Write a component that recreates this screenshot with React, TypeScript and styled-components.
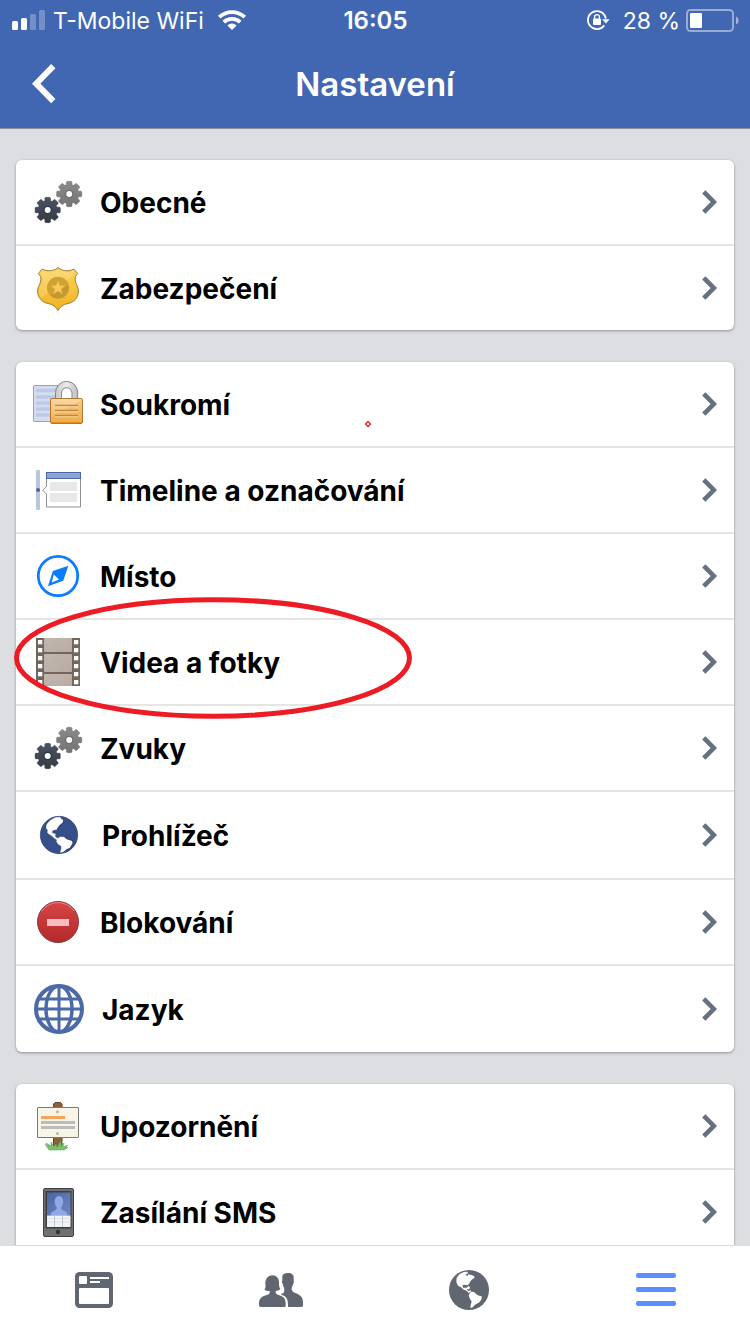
import React from 'react';
import styled, { createGlobalStyle } from 'styled-components';

const GlobalStyle = createGlobalStyle`
  * { box-sizing: border-box; }
  body {
    margin: 0;
    background: #dddee2;
    font-family: Inter, "Liberation Sans", sans-serif;
    color: #000;
  }
  svg { display: block; flex: none; overflow: visible; }
`;

const Screen = styled.div`
  display: flex;
  flex-direction: column;
  height: 100vh;
`;

const Header = styled.header`
  flex: none;
  background: #4267b2;
  border-bottom: 1px solid #8d919b;
  color: #fff;
`;

const StatusBar = styled.div`
  display: grid;
  grid-template-columns: 1fr auto 1fr;
  align-items: center;
  height: 40px;
  padding: 0 11px 0 12px;
  font-size: 23px;
  line-height: 28px;
`;

const StatusGroup = styled.div<{ $end?: boolean }>`
  display: flex;
  align-items: center;
  justify-content: ${(p) => (p.$end ? 'flex-end' : 'flex-start')};
  gap: ${(p) => (p.$end ? 6 : 8)}px;
`;

const Carrier = styled.span`
  padding: 2px 6px 0 0;
`;

const Charge = styled.span`
  padding: 2px 0 0 8px;
`;

const Clock = styled.time`
  padding-top: 2px;
  font-size: 24px;
  font-weight: 600;
`;

const NavBar = styled.div`
  display: grid;
  grid-template-columns: 1fr auto 1fr;
  align-items: center;
  height: 88px;
  padding: 0 32px;
`;

const BackButton = styled.button`
  justify-self: start;
  padding: 0;
  border: 0;
  background: none;
  color: inherit;
  cursor: pointer;
`;

const Title = styled.h1`
  margin: 0;
  font-size: 33px;
  font-weight: 600;
  line-height: 40px;
`;

const Content = styled.main`
  flex: 1;
  min-height: 0;
  display: flex;
  flex-direction: column;
  gap: 32px;
  padding: 31px 16px;
  overflow-y: auto;
  scrollbar-width: none;
`;

const Card = styled.ul`
  flex: none;
  margin: 0;
  padding: 0;
  list-style: none;
  background: #fff;
  border-radius: 6px;
  box-shadow: 0 1px 3px rgba(0, 0, 0, 0.35);
`;

const Item = styled.li`
  position: relative;
  & + & { border-top: 2px solid #e5e5e5; }
`;

const RowLink = styled.a`
  display: flex;
  align-items: center;
  gap: 18px;
  padding: 18px 17px 18px 18px;
  color: inherit;
  text-decoration: none;
`;

const Label = styled.span`
  flex: 1;
  padding-top: 2px;
  font-size: 28px;
  font-weight: 650;
  line-height: 34px;
`;

const Marker = styled.svg`
  position: absolute;
  z-index: 1;
  left: -2px;
  top: -23px;
  pointer-events: none;
`;

const Dot = styled.svg`
  position: absolute;
  z-index: 1;
  left: 348px;
  top: 58px;
  pointer-events: none;
`;

const TabBar = styled.nav`
  flex: none;
  display: grid;
  grid-template-columns: repeat(4, 1fr);
  height: 89px;
  background: #fff;
  border-top: 1px solid #dcdde0;
`;

const Tab = styled.a<{ $active?: boolean }>`
  display: flex;
  align-items: center;
  justify-content: center;
  color: ${(p) => (p.$active ? '#5890ff' : '#606770')};
`;

/* ---------- status bar icons ---------- */

const SignalIcon = () => (
  <svg width="33" height="20" viewBox="0 0 33 20" fill="#fff">
    <rect x="0" y="11" width="6" height="9" rx="1.5" />
    <rect x="9" y="8" width="6" height="12" rx="1.5" />
    <rect x="18" y="4" width="6" height="16" rx="1.5" opacity=".27" />
    <rect x="27" y="0" width="6" height="20" rx="1.5" opacity=".27" />
  </svg>
);

const WifiIcon = () => (
  <svg width="28" height="20" viewBox="0 0 28 20" fill="none" stroke="#fff" strokeWidth="3.8">
    <path d="M1.2 7.200a18.500 18.500 0 0 1 25.600 0" />
    <path d="M5.800 12.200a12 12 0 0 1 16.400 0" />
    <path d="M14 20l-4.600-4.600a6.600 6.600 0 0 1 9.200 0z" fill="#fff" stroke="none" />
  </svg>
);

const RotationLockIcon = () => (
  <svg width="22" height="20" viewBox="0 0 22 20" fill="none" stroke="#fff" strokeWidth="1.8">
    <path d="M17.200 15.400A9 9 0 1 1 18.800 8.600" />
    <path d="M15.200 9.200h7.400l-3.700 4.300z" fill="#fff" stroke="none" />
    <rect x="6" y="8.400" width="8" height="6.600" rx="1" fill="#fff" stroke="none" />
    <path d="M7.600 9V7a2.400 2.400 0 0 1 4.800 0v2" strokeWidth="1.400" />
  </svg>
);

const BatteryIcon = () => (
  <svg width="53" height="23" viewBox="0 0 53 23">
    <rect x="1" y="1" width="46" height="21" rx="3.5" fill="none" stroke="#fff" strokeOpacity=".45" strokeWidth="2" />
    <rect x="4" y="4" width="12" height="15" rx="1" fill="#fff" />
    <path d="M50 7.500c3.500 1.500 3.500 6.500 0 8z" fill="#fff" opacity=".5" />
  </svg>
);

const BackIcon = () => (
  <svg width="24" height="40" viewBox="0 0 24 40" fill="none" stroke="#fff" strokeWidth="6">
    <path d="M21.300 2.200L4.200 19.700l17.100 17.500" />
  </svg>
);

const ChevronIcon = () => (
  <svg width="15" height="24" viewBox="0 0 15 24" fill="none" stroke="#667080" strokeWidth="4.600">
    <path d="M1.800 1.800L11.800 12 1.800 22.200" />
  </svg>
);

/* ---------- row icons ---------- */

function gearPath(cx: number, cy: number): string {
  const points: string[] = [];
  const add = (r: number, deg: number) => {
    const a = (deg * Math.PI) / 180;
    points.push(`${(cx + r * Math.cos(a)).toFixed(2)} ${(cy + r * Math.sin(a)).toFixed(2)}`);
  };
  for (let i = 0; i < 8; i++) {
    const a = i * 45;
    add(9.6, a - 20);
    add(10.2, a - 16);
    add(12.2, a - 14);
    add(12.8, a - 9);
    add(12.8, a + 9);
    add(12.2, a + 14);
    add(10.2, a + 16);
    add(9.6, a + 20);
  }
  return `M${points.join('L')}Z`;
}

const Gear = ({ cx, cy, fill, rim }: { cx: number; cy: number; fill: string; rim: string }) => (
  <g>
    <path d={gearPath(cx, cy)} fill={fill} stroke={rim} strokeWidth=".4" />
    <circle cx={cx} cy={cy} r="4" fill={rim} />
    <circle cx={cx} cy={cy} r="3" fill="#fff" />
  </g>
);

const GearsIcon = () => (
  <svg width="48" height="48" viewBox="0 0 48 48">
    <defs>
      <linearGradient id="gearLight" x1="0" y1="0" x2="0" y2="1">
        <stop offset="0" stopColor="#8a8a8a" />
        <stop offset="1" stopColor="#747474" />
      </linearGradient>
      <linearGradient id="gearDark" x1="0" y1="0" x2="0" y2="1">
        <stop offset="0" stopColor="#4b5261" />
        <stop offset="1" stopColor="#363b46" />
      </linearGradient>
    </defs>
    <Gear cx={35.200} cy={16} fill="url(#gearLight)" rim="#6a6a6a" />
    <Gear cx={13.700} cy={32} fill="url(#gearDark)" rim="#2f343e" />
  </svg>
);

const BadgeIcon = () => (
  <svg width="48" height="48" viewBox="0 0 48 48">
    <defs>
      <linearGradient id="badge" x1="0" y1="0" x2="0" y2="1">
        <stop offset="0" stopColor="#fad55c" />
        <stop offset="1" stopColor="#f3b11f" />
      </linearGradient>
    </defs>
    <path
      d="M24 3.500C22 6 14 8.500 8.300 5L4.300 9.500C8 13 7.500 17 4.500 22.500C1.500 30 6 38 14 39.500C19 40.200 22 43 24 46.500C26 43 29 40.200 34 39.500C42 38 46.500 30 43.500 22.500C40.500 17 40 13 43.700 9.500L39.700 5C34 8.500 26 6 24 3.500Z"
      fill="url(#badge)" stroke="#9b7d33" strokeWidth="1"
    />
    <path d="M24 5.200C22 7.500 14 10 8.600 6.600L6 9.600C9.400 13.500 9 18 6 23C4.500 27 4.900 31 7 34L39 11.500C38.800 10 39.500 9 41 8L39.400 6.600C34 10 26 7.500 24 5.200Z" fill="#fff" opacity=".16" />
    <circle cx="24" cy="23.700" r="11" fill="#d0a236" />
    <path d="M16.300 31.500A11 11 0 0 0 34.600 21z" fill="#b5922c" opacity=".55" />
    <path d="M24 17l2 4.800h5l-4 3.200 1.500 5-4.500-3-4.500 3 1.500-5-4-3.200h5z" fill="#fbc95a" stroke="#efb23c" strokeWidth=".7" />
  </svg>
);

const PrivacyIcon = () => (
  <svg width="48" height="48" viewBox="0 0 48 48">
    <defs>
      <linearGradient id="lockBody" x1="0" y1="0" x2="0" y2="1">
        <stop offset="0" stopColor="#fbd8a0" />
        <stop offset="1" stopColor="#f6b04c" />
      </linearGradient>
      <linearGradient id="shackle" x1="0" y1="0" x2="1" y2="0">
        <stop offset="0" stopColor="#c8c8c8" />
        <stop offset=".5" stopColor="#ececec" />
        <stop offset="1" stopColor="#bdbdbd" />
      </linearGradient>
    </defs>
    <rect x="-.5" y="5.500" width="30" height="36" rx="1.500" fill="#d4dcef" stroke="#8da2d6" />
    <path d="M3.500 10.500h22M3.500 17h22M3.500 23h22M3.500 29h22M3.500 35h22" stroke="#bdc9e6" strokeWidth="3.600" strokeLinecap="round" />
    <path d="M27.400 19.500V13a5.300 5.300 0 0 1 10.600 0v6.500z" fill="#fff" />
    <path d="M21.500 19.500V12.500a11 11 0 0 1 22.200 0V19.500H38V13a5.300 5.300 0 0 0-10.600 0V19.500Z" fill="url(#shackle)" stroke="#858585" strokeWidth="1" />
    <rect x="16.500" y="18.500" width="32" height="25" rx="1.500" fill="url(#lockBody)" stroke="#ad7a35" />
    <path d="M17 43V37L48 20v23z" fill="#ef9a2c" opacity=".22" />
    <path d="M17.500 42.500h30" stroke="#dd8c24" strokeWidth="1" />
    <path d="M21 25.500h23M21 30.500h23M21 35.500h23" stroke="#b98a4c" strokeWidth="1.500" />
    <path d="M21 26.800h23M21 31.800h23M21 36.800h23" stroke="#fce3b8" strokeWidth="1" opacity=".7" />
  </svg>
);

const TimelineIcon = () => (
  <svg width="48" height="48" viewBox="0 0 48 48">
    <rect x="2" y="4" width="4" height="40" rx="1" fill="#b9c6de" />
    <circle cx="4" cy="24" r="2" fill="#4867a8" />
    <path d="M12.500 8V20.500L8.800 24.300l3.700 3.800V41h34V8z" fill="#fff" stroke="#8f9194" strokeWidth="1" />
    <rect x="12.500" y="6.500" width="34" height="6" fill="#8fa4d0" stroke="#4a68a8" />
    <rect x="16" y="16" width="27" height="9" fill="#e8e8e8" />
    <rect x="16" y="27" width="27" height="9" fill="#e8e8e8" />
  </svg>
);

const CompassIcon = () => (
  <svg width="48" height="48" viewBox="0 0 48 48">
    <circle cx="24" cy="24" r="19.700" fill="#fff" stroke="#0a7cff" strokeWidth="2.700" />
    <path d="M34.400 13.800L18.900 18.900 13.900 34.200 29.200 28.700Z" fill="#0a7cff" />
    <path d="M19.800 22.600L17.600 30.600 25 27.600Z" fill="#fff" />
  </svg>
);

const FilmIcon = () => (
  <svg width="48" height="48" viewBox="0 0 48 48">
    <defs>
      <linearGradient id="filmFrame" x1="0" y1="0" x2="1" y2="1">
        <stop offset="0" stopColor="#c0b7ae" />
        <stop offset="1" stopColor="#b9aba3" />
      </linearGradient>
    </defs>
    <rect x="2" width="44" height="48" fill="#74655c" />
    <rect x="10" y="0" width="28" height="14" rx="1" fill="url(#filmFrame)" />
    <rect x="10" y="16" width="28" height="18" rx="1" fill="url(#filmFrame)" />
    <rect x="10" y="36" width="28" height="12" rx="1" fill="url(#filmFrame)" />
    {[2, 10, 18, 26, 34, 42].map((y) => (
      <g key={y} fill="#fff">
        <rect x="4" y={y} width="4.300" height="4.300" />
        <rect x="40" y={y} width="4.300" height="4.300" />
      </g>
    ))}
  </svg>
);

const BrowserIcon = () => (
  <svg width="50" height="50" viewBox="72 315 150 150">
    <circle cx="147" cy="390" r="56" fill="#374f88" stroke="#2a3d6c" strokeWidth="2" />
    <path
      d="M136 338L150 337L153 342L159 346L158 352L150 358L143 366L140 373L134 374L127 376L125 383L131 386L136 388L134 393L139 398L145 401L143 405L134 400L127 393L119 388L113 383L114 376L109 370L111 358L120 347Z"
      fill="#fff" stroke="#fff" strokeWidth="2" strokeLinejoin="round"
    />
    <path
      d="M143 402L150 396L162 397L170 403L186 408L187 415L179 428L168 433L159 440L152 442L154 432L155 424L144 416L140 409Z"
      fill="#fff" stroke="#fff" strokeWidth="2" strokeLinejoin="round"
    />
    <path d="M161 346L160 353L145 368L142 375M164 396L172 402L188 407L189 416L180 430L169 435" fill="none" stroke="#22335c" strokeWidth="3" opacity=".7" />
  </svg>
);

const BlockIcon = () => (
  <svg width="48" height="48" viewBox="0 0 48 48">
    <defs>
      <linearGradient id="block" x1="0" y1="0" x2="0" y2="1">
        <stop offset="0" stopColor="#d64545" />
        <stop offset="1" stopColor="#b32a2a" />
      </linearGradient>
    </defs>
    <circle cx="24" cy="24" r="20.500" fill="url(#block)" stroke="#8a3a3a" strokeWidth="1" />
    <path d="M8 13a19.400 19.400 0 0 1 32 0" fill="none" stroke="#ee9090" strokeWidth=".8" />
    <rect x="13" y="21" width="22" height="7" fill="#f8bcc0" />
  </svg>
);

const LanguageIcon = () => (
  <svg width="50" height="50" viewBox="0 0 50 50" fill="none" stroke="#4c69a8" strokeWidth="3.500">
    <circle cx="25" cy="25" r="23" strokeWidth="4" />
    <ellipse cx="25" cy="25" rx="13" ry="23" />
    <path d="M25 2v46M2 25h46M4.500 15h41M4.500 35h41" strokeWidth="3" />
  </svg>
);

const SignIcon = () => (
  <svg width="48" height="48" viewBox="0 0 48 48">
    <path d="M19.500 6V2l1.500-1.500h5.500L28 2v4M19.500 35h8.500v10h-8.500z" fill="#8c5f38" stroke="#6a4526" strokeWidth="1" />
    <rect x="3.500" y="5.500" width="41" height="30" rx=".5" fill="#f8f5e6" stroke="#77797b" />
    <circle cx="23.500" cy="9.700" r="1.500" fill="#b8b8b4" />
    <circle cx="23.500" cy="31.400" r="1.500" fill="#b8b8b4" />
    <rect x="7" y="14" width="24" height="3" fill="#f5a45d" />
    <rect x="7" y="19" width="34" height="3" fill="#bcbcbc" />
    <rect x="7" y="24" width="34" height="3" fill="#bcbcbc" />
    <path d="M15 48l-4-6 4 2.500-3-3.500 5 3 0-4 3 4.500 2-2.500 1 3.500 4-7 0 6 3-3.500-1 4 5-2-2.500 2.500 2.500 0-4 2.500z" fill="#7cc36a" stroke="#56a04a" strokeWidth=".5" />
  </svg>
);

const PhoneIcon = () => (
  <svg width="48" height="48" viewBox="0 0 48 48">
    <defs>
      <linearGradient id="phoneScreen" x1="0" y1="0" x2="1" y2="1">
        <stop offset="0" stopColor="#4a64a4" />
        <stop offset="1" stopColor="#7089c2" />
      </linearGradient>
    </defs>
    <rect x="9.500" y=".5" width="30" height="48" rx="1.500" fill="#6f7072" stroke="#414243" />
    <rect x="11.500" y="3" width="26" height="37.500" fill="#3c3d3f" />
    <rect x="13" y="4.500" width="23.500" height="23" fill="url(#phoneScreen)" />
    <path d="M16.500 27.500c0-5 5.500-4 6.500-7.500-3-3-3.500-12 2-12s5 9 2 12c1 3.500 6.500 2.500 6.500 7.500z" fill="#8ea9e4" />
    <rect x="13" y="27.500" width="23.500" height="11.500" fill="#f1f3f5" />
    <path d="M13 30.500h23.500M13 34h23.500" stroke="#dfe2e6" strokeWidth="1" />
    <path d="M20.500 27.500V39M28.500 27.500V39" stroke="#bfc9d2" strokeWidth="1" />
    <circle cx="24" cy="44" r="2.200" fill="#333435" />
  </svg>
);

/* ---------- tab icons ---------- */

const FeedIcon = () => (
  <svg width="38" height="36" viewBox="0 0 38 36">
    <rect width="38" height="36" rx="4.500" fill="currentColor" />
    <rect x="4" y="4" width="8" height="8" rx="1" fill="#fff" />
    <rect x="15" y="5" width="19" height="2" fill="#fff" />
    <rect x="15" y="9" width="10" height="2" fill="#fff" />
    <rect x="4" y="16" width="30" height="16" rx="1" fill="#fff" />
  </svg>
);

const FriendsIcon = () => (
  <svg width="44" height="34" viewBox="777 113 132 102" fill="currentColor">
    <path d="M864 113C876 113 882 119 881 128L881 136C883 138 881 144 879 146C878 152 876 155 875 158C874 166 878 170 886 173C903 180 909 186 909 202V210C909 214 907 215 904 215H864C864 195 863 185 846 179C841 177 843 176 849 174C853 172 854 165 852 157C850 153 849 149 848 145C845 142 845 138 847 135V122C848 116 855 113 864 113Z" />
    <path d="M818 120C830 120 836 129 837 140C837 148 836 154 841 160C838 165 832 166 827 167C826 174 828 177 836 179C853 184 857 192 857 206V211C857 214 855 215 852 215H783C779 215 777 213 777 209V203C778 190 784 184 798 180C808 177 810 174 809 167C803 166 796 166 793 163C799 156 796 150 796 143C797 129 805 120 818 120Z" />
  </svg>
);

const NotificationsIcon = () => (
  <svg width="40" height="40" viewBox="222 105 120 120">
    <circle cx="282" cy="165" r="60" fill="currentColor" />
    <path
      d="M277 110L266 111L253 118L245 128L244 142L249 152L258 157L266 164L275 167L282 175L284 170L289 170L287 166L280 168L275 162L283 163L285 156L280 153L275 158L264 158L262 151L268 149L277 151L282 147L286 139L292 133L299 128L297 123L289 120L279 118L278 124L271 119L279 115Z"
      fill="#fff"
    />
    <path d="M284 174L289 170L297 171L306 179L312 182L320 184V191L315 200L308 205L300 209L293 217L286 219L287 210L290 200L285 191L281 183Z" fill="#fff" />
  </svg>
);

const MenuIcon = () => (
  <svg width="40" height="34" viewBox="0 0 40 34" fill="currentColor">
    <rect width="40" height="5" rx="2" />
    <rect y="14" width="40" height="5" rx="2" />
    <rect y="28" width="40" height="5" rx="2" />
  </svg>
);

type Entry = { label: string; icon: React.ComponentType; mark?: 'ellipse' | 'dot' };

const groups: Entry[][] = [
  [
    { label: 'Obecné', icon: GearsIcon },
    { label: 'Zabezpečení', icon: BadgeIcon },
  ],
  [
    { label: 'Soukromí', icon: PrivacyIcon, mark: 'dot' },
    { label: 'Timeline a označování', icon: TimelineIcon },
    { label: 'Místo', icon: CompassIcon },
    { label: 'Videa a fotky', icon: FilmIcon, mark: 'ellipse' },
    { label: 'Zvuky', icon: GearsIcon },
    { label: 'Prohlížeč', icon: BrowserIcon },
    { label: 'Blokování', icon: BlockIcon },
    { label: 'Jazyk', icon: LanguageIcon },
  ],
  [
    { label: 'Upozornění', icon: SignIcon },
    { label: 'Zasílání SMS', icon: PhoneIcon },
  ],
];

const Row = ({ label, icon: Icon, mark }: Entry) => (
  <Item>
    <RowLink href="#">
      <Icon />
      <Label>{label}</Label>
      <ChevronIcon />
    </RowLink>
    {mark === 'ellipse' && (
      <Marker width="398" height="122" fill="none" stroke="#ed1c24" strokeWidth="5">
        <ellipse cx="199" cy="61" rx="196.500" ry="58.300" />
      </Marker>
    )}
    {mark === 'dot' && (
      <Dot width="8" height="8" fill="none" stroke="#ed1c24" strokeWidth="1.300">
        <path d="M4 1.500L6.500 4 4 6.500 1.500 4Z" />
      </Dot>
    )}
  </Item>
);

export default function App() {
  return (
    <Screen>
      <GlobalStyle />
      <Header>
        <StatusBar>
          <StatusGroup>
            <SignalIcon />
            <Carrier>T-Mobile WiFi</Carrier>
            <WifiIcon />
          </StatusGroup>
          <Clock>16:05</Clock>
          <StatusGroup $end>
            <RotationLockIcon />
            <Charge>28 %</Charge>
            <BatteryIcon />
          </StatusGroup>
        </StatusBar>
        <NavBar>
          <BackButton aria-label="Zpět">
            <BackIcon />
          </BackButton>
          <Title>Nastavení</Title>
        </NavBar>
      </Header>
      <Content>
        {groups.map((entries) => (
          <Card key={entries[0].label}>
            {entries.map((entry) => (
              <Row key={entry.label} {...entry} />
            ))}
          </Card>
        ))}
      </Content>
      <TabBar>
        <Tab href="#" aria-label="Kanál"><FeedIcon /></Tab>
        <Tab href="#" aria-label="Přátelé"><FriendsIcon /></Tab>
        <Tab href="#" aria-label="Upozornění"><NotificationsIcon /></Tab>
        <Tab href="#" aria-label="Nabídka" $active><MenuIcon /></Tab>
      </TabBar>
    </Screen>
  );
}
